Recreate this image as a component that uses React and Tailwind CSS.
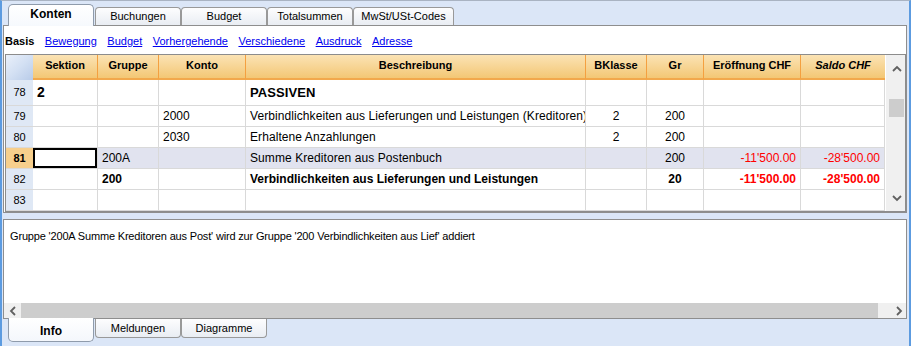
import React from 'react';

const cols = 'grid grid-cols-[27px_65px_61px_87px_340px_61px_57px_97px_84px]';

const rows = [
    { n: 78, sek: '2', desc: 'PASSIVEN', big: true },
    { n: 79, konto: '2000', desc: 'Verbindlichkeiten aus Lieferungen und Leistungen (Kreditoren)', bk: '2', gr: '200' },
    { n: 80, konto: '2030', desc: 'Erhaltene Anzahlungen', bk: '2', gr: '200' },
    { n: 81, gruppe: '200A', desc: 'Summe Kreditoren aus Postenbuch', gr: '200', er: "-11'500.00", sa: "-28'500.00", sel: true },
    { n: 82, gruppe: '200', desc: 'Verbindlichkeiten aus Lieferungen und Leistungen', gr: '20', er: "-11'500.00", sa: "-28'500.00", bold: true },
    { n: 83 },
];

function Chevron({ dir }) {
    const d = {
        up: 'M1 6 L5 2 L9 6',
        down: 'M1 2 L5 6 L9 2',
        left: 'M6 1 L2 5 L6 9',
        right: 'M2 1 L6 5 L2 9',
    }[dir];
    const horiz = dir === 'up' || dir === 'down';
    return (
        <svg width={horiz ? 10 : 8} height={horiz ? 8 : 10} viewBox={horiz ? '0 0 10 8' : '0 0 8 10'}>
            <path d={d} fill="none" stroke="#606060" strokeWidth="1.8" />
        </svg>
    );
}

function TopTab({ label, active, width = 86, className = '' }) {
    if (active) {
        return (
            <div
                style={{ width }}
                className={`h-[22px] flex items-center justify-center rounded-t-[5px] border border-b-0 border-[#8f9bab] bg-gradient-to-b from-white to-[#f6f9fd] text-[12px] font-bold text-black pb-[3px] ${className}`}
            >
                {label}
            </div>
        );
    }
    return (
        <div
            style={{ width }}
            className={`h-[18px] mb-px flex items-center justify-center rounded-t-[4px] border border-b-0 border-[#999999] bg-gradient-to-b from-[#fdfdfe] to-[#e9edf3] text-[11px] text-black ${className}`}
        >
            {label}
        </div>
    );
}

function BottomTab({ label, active, className = '' }) {
    if (active) {
        return (
            <div className={`w-[86px] h-[24px] flex items-center justify-center rounded-b-[5px] border border-t-0 border-[#8f9bab] bg-gradient-to-b from-white to-[#f4f7fc] text-[12px] font-bold text-black pt-[2px] ${className}`}>
                {label}
            </div>
        );
    }
    return (
        <div className={`w-[86px] h-[19px] mt-px flex items-center justify-center rounded-b-[4px] border border-t-0 border-[#999999] bg-gradient-to-b from-[#fdfdfe] to-[#e9edf3] text-[11px] text-black ${className}`}>
            {label}
        </div>
    );
}

export default function App() {
    return (
        <div
            className="w-[911px] h-[346px] overflow-hidden bg-[#dbe6f7] border-t border-t-[#a9b3c2] border-l-2 border-l-[#5c9be0] border-r-2 border-r-[#5c9be0]"
            style={{ fontFamily: '"Liberation Sans", Arial, sans-serif' }}
        >
            <div className="ml-px w-[904px]">
                {/* top tabs */}
                <div className="relative z-10 flex items-end h-[25px] pl-[5px]">
                    <TopTab label="Konten" active />
                    <TopTab label="Buchungen" className="ml-[1px]" />
                    <TopTab label="Budget" />
                    <TopTab label="Totalsummen" />
                    <TopTab label="MwSt/USt-Codes" width={101} />
                </div>

                {/* main panel */}
                <div className="-mt-px border border-[#8e8e8e] bg-white">
                    <div className="h-[28px] flex items-center gap-[10.5px] pl-[1px] pt-[2px] text-[11px]">
                        <span className="font-bold text-black">Basis</span>
                        {['Bewegung', 'Budget', 'Vorhergehende', 'Verschiedene', 'Ausdruck', 'Adresse'].map((l) => (
                            <a key={l} href="#" className="text-[#0000ee] underline">{l}</a>
                        ))}
                    </div>

                    <div className="ml-px w-[901px] flex border border-[#8c8c8c]">
                        <div className="w-[879px]">
                            {/* header */}
                            <div className={`${cols} h-[25px] text-[11px] font-bold text-black`}>
                                <div className="bg-gradient-to-br from-[#eaf0fa] via-[#d3e0f3] to-[#b8cbe8]"></div>
                                {['Sektion', 'Gruppe', 'Konto', 'Beschreibung', 'BKlasse', 'Gr', 'Eröffnung CHF', 'Saldo CHF'].map((h, i) => (
                                    <div
                                        key={h}
                                        className={`flex items-center justify-center pb-[2px] border-b-2 border-b-[#f2a84c] bg-gradient-to-b from-[#fbe3b4] to-[#f3c774] ${i < 7 ? 'border-r border-r-[#f4a040]' : ''} ${h === 'Saldo CHF' ? 'italic' : ''}`}
                                    >
                                        {h}
                                    </div>
                                ))}
                            </div>

                            {/* rows */}
                            {rows.map((r) => {
                                const rowBg = r.sel ? 'bg-[#e1e3ef]' : 'bg-white';
                                const txt = r.bold ? 'font-bold text-[12px]' : 'text-[12px]';
                                const cell = `flex items-center border-r border-b border-[#d9d9d9] overflow-hidden whitespace-nowrap ${rowBg}`;
                                return (
                                    <div key={r.n} className={`${cols} ${r.big ? 'h-[26px]' : 'h-[21px]'} text-black`}>
                                        <div className={`flex items-center justify-center border-b border-[#d9d9d9] text-[11px] ${r.sel ? 'bg-[#f7cf8c] font-bold' : 'bg-[#dfe8f5]'}`}>
                                            {r.n}
                                        </div>
                                        <div className={`${cell} pl-[4px] ${r.big ? 'text-[14px] font-bold' : 'text-[12px]'} ${r.sel ? 'bg-white shadow-[inset_0_0_0_2px_#000]' : ''}`}>
                                            {r.sek}
                                        </div>
                                        <div className={`${cell} pl-[4px] ${txt}`}>{r.gruppe}</div>
                                        <div className={`${cell} pl-[4px] ${txt}`}>{r.konto}</div>
                                        <div className={`${cell} pl-[4px] ${r.big ? 'text-[13px] font-bold' : txt} ${r.bold ? '' : 'tracking-[0.08px]'}`}>{r.desc}</div>
                                        <div className={`${cell} justify-center ${txt}`}>{r.bk}</div>
                                        <div className={`${cell} justify-center ${txt}`}>{r.gr}</div>
                                        <div className={`${cell} justify-end pr-[4px] text-[#ff0000] ${txt}`}>{r.er}</div>
                                        <div className={`${cell} justify-end pr-[4px] text-[#ff0000] ${txt}`}>{r.sa}</div>
                                    </div>
                                );
                            })}
                        </div>

                        {/* vertical scrollbar */}
                        <div className="w-[20px] border-l border-white bg-[#f0f0f0] flex flex-col">
                            <div className="h-[18px] flex items-end justify-center pl-[2px]">
                                <Chevron dir="up" />
                            </div>
                            <div className="mt-[26px] ml-[3px] w-[15px] h-[18px] bg-[#cdcdcd]"></div>
                            <div className="flex-1"></div>
                            <div className="h-[18px] flex items-start justify-center pl-[2px] pt-[1px]">
                                <Chevron dir="down" />
                            </div>
                        </div>
                    </div>
                </div>

                {/* info panel */}
                <div className="mt-[6px] h-[100px] border border-[#8e8e8e] bg-white flex flex-col">
                    <div className="flex-1 pl-[6px] pt-[8px] text-[11px] tracking-[-0.17px] text-black">
                        Gruppe '200A Summe Kreditoren aus Post' wird zur Gruppe '200 Verbindlichkeiten aus Lief' addiert
                    </div>
                    <div className="h-[15px] flex bg-[#f0f0f0]">
                        <div className="w-[17px] flex items-center justify-center">
                            <Chevron dir="left" />
                        </div>
                        <div className="w-[857px] bg-[#cdcdcd]"></div>
                        <div className="flex-1 flex items-center justify-end pr-[3px]">
                            <Chevron dir="right" />
                        </div>
                    </div>
                </div>

                {/* bottom tabs */}
                <div className="relative z-10 -mt-px flex items-start pl-[5px]">
                    <BottomTab label="Info" active />
                    <BottomTab label="Meldungen" className="ml-[1px]" />
                    <BottomTab label="Diagramme" />
                </div>
            </div>
        </div>
    );
}
